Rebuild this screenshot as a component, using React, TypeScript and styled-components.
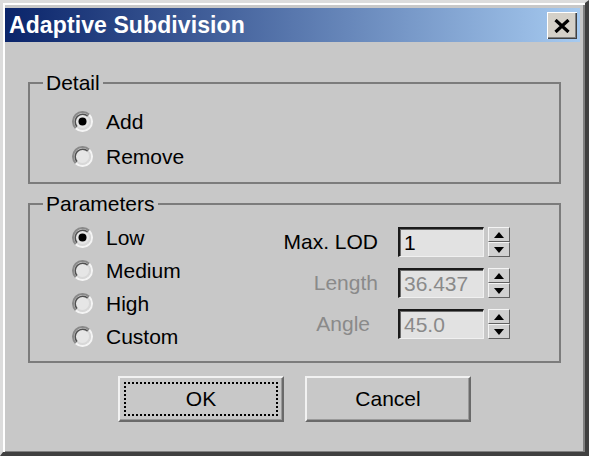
import styled, { createGlobalStyle } from 'styled-components'

const GlobalStyle = createGlobalStyle`
	html, body {
		margin: 0;
		padding: 0;
		background: #c8c8c8;
	}
	body {
		font-family: "Liberation Sans", Arial, sans-serif;
	}
`

const Window = styled.div`
	width: 589px;
	height: 456px;
	box-sizing: border-box;
	background: #c8c8c8;
	border-style: solid;
	border-width: 3px 4px 4px 3px;
	border-color: #dcdcdc #404040 #404040 #dcdcdc;
	box-shadow: inset 2px 2px 0 #ffffff, inset -2px -1px 0 #808080;
	padding: 5px 5px 0 2px;
	display: flex;
	flex-direction: column;
`

const TitleBar = styled.div`
	height: 34px;
	flex-shrink: 0;
	display: flex;
	align-items: center;
	justify-content: space-between;
	padding: 0 3px 0 4px;
	background: linear-gradient(to right, #0a246a 0%, #a6caf0 100%);
`

const Title = styled.span`
	color: #fff;
	font-family: "Liberation Sans", Arial, sans-serif;
	font-weight: 700;
	font-size: 23px;
	letter-spacing: 0.1px;
`

const CloseButton = styled.button`
	width: 30px;
	height: 27px;
	padding: 0;
	margin-top: 1px;
	border: none;
	background: #d4d0c8;
	display: flex;
	align-items: center;
	justify-content: center;
	box-shadow: inset 1px 1px 0 #ffffff, inset -1px -1px 0 #404040, inset -2px -2px 0 #808080;
`

const Content = styled.div`
	padding: 0 19px 0 23px;
	display: flex;
	flex-direction: column;
`

const Group = styled.fieldset<{ $top: number; $padTop: number; $padBottom: number }>`
	margin: ${p => p.$top}px 0 0;
	padding: ${p => p.$padTop}px 0 ${p => p.$padBottom}px 0;
	border: 2px solid #7c7c7c;
	min-width: 0;
`

const Legend = styled.legend`
	margin-left: 13px;
	padding: 0 3px;
	font-size: 21px;
	line-height: 22px;
	color: #000;
`

const Row = styled.label<{ $h: number }>`
	height: ${p => p.$h}px;
	display: flex;
	align-items: center;
	gap: 13px;
	font-size: 21px;
	color: #000;
`

const RadioList = styled.div`
	padding-left: 42px;
	display: flex;
	flex-direction: column;
`

const ParamsBody = styled.div`
	display: flex;
	align-items: flex-start;
`

const FieldGrid = styled.div`
	margin: 6px 49px 0 auto;
	display: grid;
	grid-template-columns: 115px 86px 26px;
	row-gap: 11px;
`

const FieldLabel = styled.span<{ $disabled?: boolean; $inset?: number }>`
	height: 30px;
	display: flex;
	align-items: center;
	justify-content: flex-end;
	white-space: nowrap;
	padding-right: ${p => 20 + (p.$inset || 0)}px;
	font-size: 21px;
	color: ${p => (p.$disabled ? '#8a8a8a' : '#000')};
`

const Field = styled.div<{ $disabled?: boolean }>`
	height: 30px;
	box-sizing: border-box;
	border-style: solid;
	border-width: 2px 1px 1px 2px;
	border-color: #1a1a1a #f0f0f0 #f0f0f0 #1a1a1a;
	box-shadow: inset 1px 1px 0 #6a6a6a;
	background: #e2e2e2;
	padding: 0 4px;
	display: flex;
	align-items: center;
	font-size: 21px;
	color: ${p => (p.$disabled ? '#8a8a8a' : '#000')};
`

const Spinner = styled.div`
	margin-left: 4px;
	height: 30px;
	display: flex;
	flex-direction: column;
`

const SpinHalf = styled.div`
	height: 15px;
	box-sizing: border-box;
	background: #d0d0d0;
	border-style: solid;
	border-width: 1px;
	border-color: #f4f4f4 #606060 #606060 #f4f4f4;
	display: flex;
	align-items: center;
	justify-content: center;
`

const ButtonRow = styled.div`
	margin-top: 13px;
	display: flex;
	justify-content: center;
	gap: 21px;
`

const PushButton = styled.button<{ $focused?: boolean }>`
	width: 166px;
	height: 46px;
	box-sizing: border-box;
	background: #c8c8c8;
	border-style: solid;
	border-width: 2px;
	border-color: #f2f2f2 #6a6a6a #6a6a6a #f2f2f2;
	box-shadow: inset -1px -1px 0 #9a9a9a;
	font-family: "Liberation Sans", Arial, sans-serif;
	font-size: 21px;
	color: #000;
	outline: ${p => (p.$focused ? '2px dotted #000' : 'none')};
	outline-offset: -8px;
	padding: 0;
`

const Radio = ({ checked }: { checked?: boolean }) => (
	<svg width="21" height="21" viewBox="0 0 21 21">
		<circle cx="10.5" cy="10.5" r="8" fill="#e6e6e6" />
		<path d="M3.78 17.22 A9.5 9.5 0 0 1 17.22 3.78" stroke="#8a8a8a" strokeWidth="2" fill="none" />
		<path d="M17.22 3.78 A9.5 9.5 0 0 1 3.78 17.22" stroke="#f4f4f4" strokeWidth="2" fill="none" />
		<path d="M5.2 15.8 A7.5 7.5 0 0 1 15.8 5.2" stroke="#505050" strokeWidth="1.5" fill="none" />
		<path d="M15.8 5.2 A7.5 7.5 0 0 1 5.2 15.8" stroke="#d8d8d8" strokeWidth="1.5" fill="none" />
		{checked && <circle cx="10.5" cy="10.5" r="4" fill="#000" />}
	</svg>
)

const Arrow = ({ up }: { up?: boolean }) => (
	<svg width="10" height="6" viewBox="0 0 10 6">
		<path d={up ? 'M5 0 L10 6 L0 6 Z' : 'M0 0 L10 0 L5 6 Z'} fill="#000" />
	</svg>
)

const SpinField = ({ label, value, disabled, inset }: { label: string; value: string; disabled?: boolean; inset?: number }) => (
	<>
		<FieldLabel $disabled={disabled} $inset={inset}>{label}</FieldLabel>
		<Field $disabled={disabled}>{value}</Field>
		<Spinner>
			<SpinHalf><Arrow up /></SpinHalf>
			<SpinHalf><Arrow /></SpinHalf>
		</Spinner>
	</>
)

const App = () => {
	return (
		<>
			<GlobalStyle />
			<Window>
				<TitleBar>
					<Title>Adaptive Subdivision</Title>
					<CloseButton aria-label="Close">
						<svg width="16" height="14" viewBox="0 0 16 14">
							<path d="M1.5 1 L14.5 13 M14.5 1 L1.5 13" stroke="#000" strokeWidth="3.2" />
						</svg>
					</CloseButton>
				</TitleBar>
				<Content>
					<Group $top={30} $padTop={10} $padBottom={8}>
						<Legend>Detail</Legend>
						<RadioList>
							<Row $h={35}><Radio checked />Add</Row>
							<Row $h={35}><Radio />Remove</Row>
						</RadioList>
					</Group>
					<Group $top={9} $padTop={6} $padBottom={8}>
						<Legend>Parameters</Legend>
						<ParamsBody>
							<RadioList>
								<Row $h={33}><Radio checked />Low</Row>
								<Row $h={33}><Radio />Medium</Row>
								<Row $h={33}><Radio />High</Row>
								<Row $h={33}><Radio />Custom</Row>
							</RadioList>
							<FieldGrid>
								<SpinField label="Max. LOD" value="1" />
								<SpinField label="Length" value="36.437" disabled />
								<SpinField label="Angle" value="45.0" disabled inset={8} />
							</FieldGrid>
						</ParamsBody>
					</Group>
					<ButtonRow>
						<PushButton $focused>OK</PushButton>
						<PushButton>Cancel</PushButton>
					</ButtonRow>
				</Content>
			</Window>
		</>
	)
}

export default App
